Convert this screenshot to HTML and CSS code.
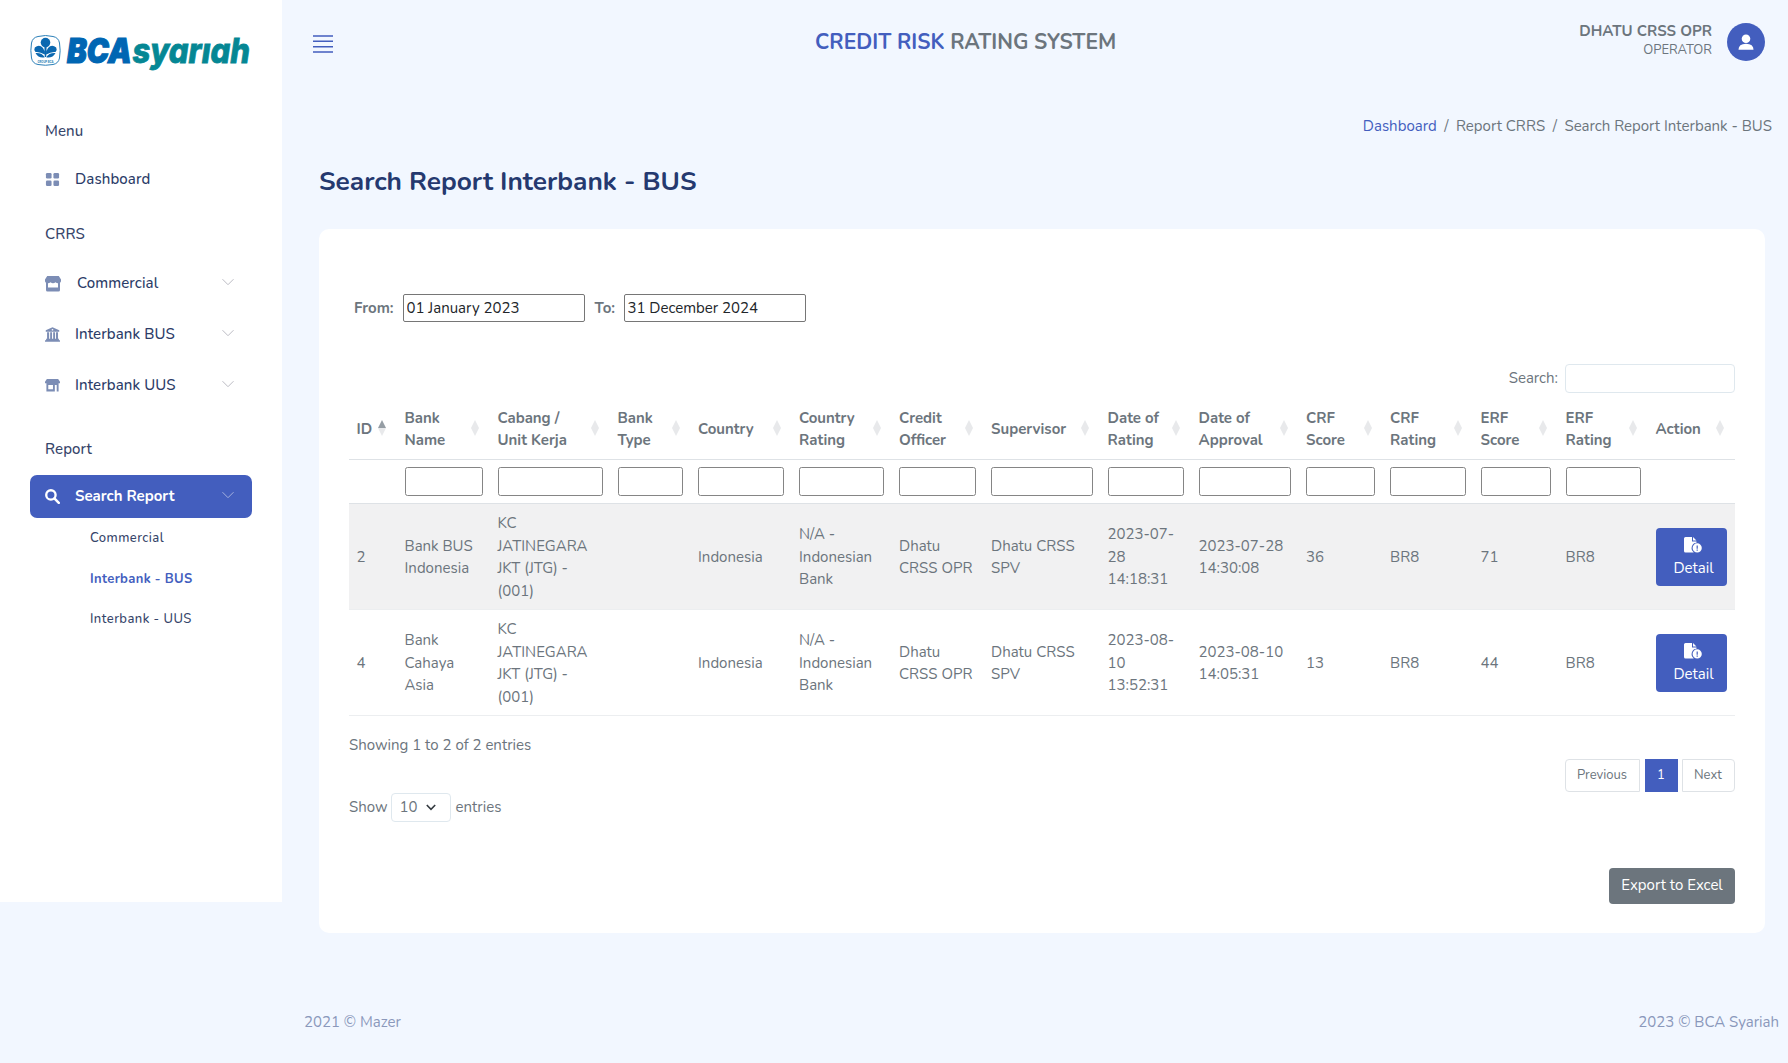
FILE: index.html
```html
<!DOCTYPE html>
<html lang="en">
<head>
<meta charset="utf-8">
<title>Search Report Interbank - BUS</title>
<link rel="stylesheet" href="styles.css">
</head>
<body>
<svg width="0" height="0" class="defs">
  <symbol id="chev" viewBox="0 0 16 16"><path d="M2.500 5.200 8 10.700l5.500-5.500" fill="none" stroke="currentColor" stroke-width="1"/></symbol>
  <symbol id="file" viewBox="0 0 18 16">
    <path d="M1.500 0H8v4.500h4.500v1.300A5.300 5.300 0 0 0 9.700 15.300 2 2 0 0 1 9 15.500H1.500A1.500 1.500 0 0 1 0 14V1.500A1.500 1.500 0 0 1 1.500 0zM9 0l3.500 3.500H9z"/>
    <path fill-rule="evenodd" d="M13.200 6.300a4.600 4.600 0 1 1 0 9.200 4.600 4.600 0 0 1 0-9.200zm-.6 2.200v3.200h1.200V8.500zm0 4v1.200h1.200v-1.200z"/>
  </symbol>
</svg>
<div class="app">
  <aside class="sidebar">
    <svg class="logo" viewBox="0 -10 230 64" width="230" height="64">
      <path d="M8 2.500Q15.500 .5 23 2.500 28.500 3.500 29.500 9q1.300 7.500 0 15-1 5.500-6.500 6.500-7.500 1.500-15 0Q2.500 29.500 1.500 24q-1.300-7.500 0-15Q2.500 3.500 8 2.500z" fill="#fff" stroke="#2b7fb8" stroke-width="1"/>
      <g fill="#0b68b0"><circle cx="15.500" cy="8.600" r="4.800"/><path d="M14.400 13h2.200l-.4 10h-1.400zM4.800 13.500q4.500-3.500 8.200.5 2 2.500 1.700 6.500Q10 17.500 5.500 18q-2-2-.7-4.500zM26.200 13.500q-4.500-3.500-8.200.5-2 2.500-1.700 6.500 4.700-3 9.200-2.500 2-2 .7-4.500z"/><path d="M5.500 19q6.500-.5 9.300 4.300-6.300 1.200-9.300-4.300zM25.500 19q-6.500-.5-9.300 4.300 6.300 1.200 9.300-4.300z"/></g>
      <text class="logo-tag" x="7.500" y="28.500" textLength="16" lengthAdjust="spacingAndGlyphs">GROUP BCA</text>
      <text class="logo-bca" x="37" y="29.300" textLength="64.500" lengthAdjust="spacingAndGlyphs">BCA</text>
      <text class="logo-sy" x="102.500" y="29.300" textLength="117.500" lengthAdjust="spacingAndGlyphs">syarıah</text>
    </svg>
    <nav class="menu">
      <div class="title first">Menu</div>
      <a class="item dash"><svg viewBox="0 0 16 16"><rect x="1" y="1" width="6" height="6" rx="1.300"/><rect x="9" y="1" width="6" height="6" rx="1.300"/><rect x="1" y="9" width="6" height="6" rx="1.300"/><rect x="9" y="9" width="6" height="6" rx="1.300"/></svg><span>Dashboard</span></a>
      <div class="title">CRRS</div>
      <a class="item wide"><svg viewBox="0 0 16 16"><path d="M2.200 0h11.600L16 3.600V5a2 2 0 0 1-1 1.700V14a1.500 1.500 0 0 1-1.500 1.500h-11A1.500 1.500 0 0 1 1 14V6.700A2 2 0 0 1 0 5V3.600zM3 7.200V11.500h10V7.200q-1.300 0-2.500-1-2.500 1.900-5 0-1.200 1-2.500 1z"/></svg><span>Commercial</span><svg class="chev"><use href="#chev"/></svg></a>
      <a class="item"><svg viewBox="0 0 16 16"><path fill-rule="evenodd" d="M8 .2 15.200 3.500V5H.8V3.500zM8 2a.9.900 0 1 0 0 1.800A.9.900 0 0 0 8 2zM2.200 5.500h2.200v7H2.200zM5.500 5.500h2v7h-2zM8.700 5.500h2v7h-2zM11.700 5.500h2.200v7h-2.200zM1.200 12.500h13.600V14H16v1.800H0V14h1.200z"/></svg><span>Interbank BUS</span><svg class="chev"><use href="#chev"/></svg></a>
      <a class="item"><svg viewBox="0 0 16 16"><path fill-rule="evenodd" d="M2 1h12l2 3v1.500H0V4zM1.500 5.500h13V14.500h-2V7.500h-2V14.500h-9zM3.500 7.500v4.500h5V7.500z"/></svg><span>Interbank UUS</span><svg class="chev"><use href="#chev"/></svg></a>
      <div class="title report">Report</div>
      <a class="item active"><svg viewBox="0 0 16 16"><circle cx="6.300" cy="6.300" r="5" fill="none" stroke="currentColor" stroke-width="2.500"/><path d="m10 10 4.700 4.700" stroke="currentColor" stroke-width="2.700" stroke-linecap="round"/></svg><span>Search Report</span><svg class="chev"><use href="#chev"/></svg></a>
      <div class="submenu"><a>Commercial</a><a class="on">Interbank - BUS</a><a>Interbank - UUS</a></div>
    </nav>
  </aside>
  <main class="main">
    <header class="topbar">
      <svg class="burger" viewBox="0 0 20 18" width="20" height="18"><path d="M0 1h20M0 6.300h20M0 11.700h20M0 17h20" stroke="#435ebe" stroke-width="1.500"/></svg>
      <div class="brand"><b>CREDIT RISK</b> RATING SYSTEM</div>
      <div class="user"><div><div class="name">DHATU CRSS OPR</div><div class="role">OPERATOR</div></div>
      <svg viewBox="0 0 38 38" width="38" height="38"><circle cx="19" cy="19" r="19" fill="#435ebe"/><circle cx="19" cy="15.800" r="4.300" fill="#fff"/><path d="M11.500 26.800q0-6 7.500-6t7.500 6z" fill="#fff"/></svg></div>
    </header>
    <div class="crumbs"><a>Dashboard</a><i>/</i><span>Report CRRS</span><i>/</i><span>Search Report Interbank - BUS</span></div>
    <h1>Search Report Interbank - BUS</h1>
    <section class="card">
      <div class="range"><b>From:</b><input class="date" value="01 January 2023"><b class="to">To:</b><input class="date" value="31 December 2024"></div>
      <div class="search"><span>Search:</span><input></div>
      <table>
        <colgroup><col class="c1"><col class="c2"><col class="c3"><col class="c4"><col class="c5"><col class="c6"><col class="c7"><col class="c8"><col class="c9"><col class="c10"><col class="c11"><col class="c12"><col class="c13"><col class="c14"><col class="c15"></colgroup>
        <thead>
          <tr class="heads"><th class="asc">ID</th><th>Bank<br>Name</th><th>Cabang /<br>Unit Kerja</th><th>Bank<br>Type</th><th>Country</th><th>Country<br>Rating</th><th>Credit<br>Officer</th><th>Supervisor</th><th>Date of<br>Rating</th><th>Date of<br>Approval</th><th>CRF<br>Score</th><th>CRF<br>Rating</th><th>ERF<br>Score</th><th>ERF<br>Rating</th><th>Action</th></tr>
          <tr class="filters"><td></td><td><input></td><td><input></td><td><input></td><td><input></td><td><input></td><td><input></td><td><input></td><td><input></td><td><input></td><td><input></td><td><input></td><td><input></td><td><input></td><td></td></tr>
        </thead>
        <tbody>
          <tr class="odd"><td>2</td><td>Bank BUS<br>Indonesia</td><td>KC<br>JATINEGARA<br>JKT (JTG) -<br>(001)</td><td></td><td>Indonesia</td><td>N/A -<br>Indonesian<br>Bank</td><td>Dhatu<br>CRSS OPR</td><td>Dhatu CRSS<br>SPV</td><td>2023-07-<br>28<br>14:18:31</td><td>2023-07-28<br>14:30:08</td><td>36</td><td>BR8</td><td>71</td><td>BR8</td><td><button class="detail"><svg><use href="#file"/></svg><span>Detail</span></button></td></tr>
          <tr><td>4</td><td>Bank<br>Cahaya<br>Asia</td><td>KC<br>JATINEGARA<br>JKT (JTG) -<br>(001)</td><td></td><td>Indonesia</td><td>N/A -<br>Indonesian<br>Bank</td><td>Dhatu<br>CRSS OPR</td><td>Dhatu CRSS<br>SPV</td><td>2023-08-<br>10<br>13:52:31</td><td>2023-08-10<br>14:05:31</td><td>13</td><td>BR8</td><td>44</td><td>BR8</td><td><button class="detail"><svg><use href="#file"/></svg><span>Detail</span></button></td></tr>
        </tbody>
      </table>
      <div class="below">
        <div><div class="info">Showing 1 to 2 of 2 entries</div>
        <div class="length"><span>Show</span><span class="select">10<svg viewBox="0 0 10 7" width="10" height="7"><path d="m.8 1 4.200 4.300L9.200 1" fill="none" stroke="#343a40" stroke-width="1.600"/></svg></span><span>entries</span></div></div>
        <div class="pager"><a>Previous</a><a class="cur">1</a><a>Next</a></div>
      </div>
      <button class="export">Export to Excel</button>
    </section>
    <footer><span>2021 © Mazer</span><span>2023 © BCA Syariah</span></footer>
  </main>
</div>
</body>
</html>
```
FILE: styles.css
```css
* { box-sizing: border-box; }
body { margin: 0; background: #f2f7ff; color: #6c757d; font: 15px/22.5px Nunito, Lato, sans-serif; }
input, button { font: inherit; letter-spacing: inherit; }
.defs { position: absolute; }
.app { display: flex; height: 1063px; overflow: hidden; }

.sidebar { width: 282px; height: 902px; background: #fff; padding: 24px 30px 0; flex: none; }
.logo { display: block; overflow: visible; }
.logo-bca, .logo-sy { font-family: Inter, sans-serif; font-weight: 900; font-style: italic; }
.logo-bca { font-size: 34px; fill: #0066b3; stroke: #0066b3; stroke-width: 1.200px; }
.logo-sy { font-size: 34.500px; font-weight: 800; fill: #058794; stroke: #058794; stroke-width: .8px; }
.logo-tag { font: 700 4px Inter, sans-serif; fill: #2b7fb8; }
.menu { color: #36456a; font-weight: 500; letter-spacing: .1px; }
.title { padding-left: 15px; height: 23px; margin: 22px 0 16px; }
.title.first { margin: 32px 0 15px; }
.item { display: flex; align-items: center; height: 43px; margin-bottom: 8px; padding: 0 15px; color: #2c3c68; border-radius: 7px; }
.item.dash { margin-bottom: 0; height: 43px; }
.item > svg { width: 15px; height: 15px; fill: #7c8db5; flex: none; }
.item > span { margin-left: 15px; flex: 1; }
.item.wide > svg:first-child { width: 16px; height: 16px; }
.item.wide > span { margin-left: 16px; }
.item .chev { width: 16px; height: 16px; color: #bcbcc4; margin: 0 1px 3px 0; }
.title.report { margin: 31px 0 14px; }
.item.active { background: #435ebe; color: #fff; font-weight: 700; letter-spacing: 0; margin-bottom: 1px; }
.item.active .chev { color: #a5b1de; }
.submenu { display: flex; flex-direction: column; padding-left: 60px; font-size: 13px; letter-spacing: .45px; }
.submenu a { height: 40.500px; line-height: 38px; }
.submenu .on { color: #435ebe; font-weight: 700; letter-spacing: .35px; }

.main { flex: 1; min-width: 0; }
.topbar { height: 84px; padding: 0 23px 0 31px; display: grid; grid-template-columns: 482px 1fr auto; align-items: center; }
.burger { margin: 4px 0 0 0; }
.brand { font-size: 21px; font-weight: 700; margin-left: 20px; white-space: nowrap; }
.brand b { color: #435ebe; font-weight: 700; }
.user { display: flex; align-items: center; gap: 15px; text-align: right; }
.user > div { padding-bottom: 2px; }
.name { font-weight: 700; line-height: 19px; }
.role { font-size: 13px; line-height: 19px; }
.crumbs { display: flex; justify-content: flex-end; height: 23px; margin-top: 31px; padding-right: 16px; }
.crumbs a { color: #435ebe; }
.crumbs i { font-style: normal; margin: 0 7.500px; }
h1 { margin: 27px 0 0 37px; font-size: 26.250px; line-height: 32px; font-weight: 700; color: #25396f; }
.card { margin: 32px 23px 0 37px; height: 704px; background: #fff; border-radius: 10px; padding: 65px 30px 0; }
.range { display: flex; align-items: center; height: 28px; padding-left: 5px; }
.range b { width: 48.500px; }
.range .to { width: 29px; margin-left: 10px; }
.date { width: 182px; height: 28px; border: 1px solid #767676; border-radius: 2px; padding: 1px 3px; color: #212529; background: #fff; }
.search { display: flex; justify-content: flex-end; align-items: center; gap: 7px; margin-top: 42px; height: 28px; }
.search input { width: 170px; height: 29px; border: 1px solid #dfe8ee; border-radius: 4px; }

table { width: 1385.500px; table-layout: fixed; border-collapse: separate; border-spacing: 0; margin-top: 7px; }
.c1 { width: 48px; } .c2 { width: 93px; } .c3 { width: 120px; } .c4 { width: 80.500px; } .c5 { width: 101px; }
.c6 { width: 100px; } .c7 { width: 92px; } .c8 { width: 116.500px; } .c9 { width: 91px; } .c10 { width: 107.500px; }
.c11 { width: 84px; } .c12 { width: 90.500px; } .c13 { width: 85px; } .c14 { width: 90px; } .c15 { width: 86.500px; }
th, td { padding: 7.500px; text-align: left; vertical-align: middle; border-bottom: 1px solid #dee2e6; white-space: nowrap; }
th { position: relative; font-weight: 700; height: 61px; }
th::before, th::after { content: ""; position: absolute; right: 11px; border: 4px solid transparent; }
th::before { top: 21px; border-bottom: 8px solid #e8e9eb; border-top: 0; }
th::after { top: 29px; border-top: 8px solid #e8e9eb; border-bottom: 0; }
th.asc::before { border-bottom-color: #959da4; }
.filters td { height: 44px; padding: 7px 7.500px; }
.filters input { display: block; width: 100%; height: 29px; border: 1px solid #858585; border-radius: 2.500px; }
tbody td { height: 106px; padding: 8px 7.500px 7px; border-color: #eceef0; }
.odd td { background: #f1f1f2; }
.detail { display: flex; flex-direction: column; align-items: center; width: 71px; height: 58px; padding: 9px 0 0; border: 0; border-radius: 4px; background: #435ebe; color: #fff; }
.detail svg { width: 18px; height: 16px; fill: #fff; margin-left: 3px; }
.detail span { margin: 4px 0 0 5px; }
.below { display: flex; justify-content: space-between; }
.info { margin-top: 18px; }
.length { display: flex; align-items: center; margin-top: 36px; gap: 5px; }
.select { display: flex; align-items: center; justify-content: space-between; width: 60px; height: 29px; border: 1px solid #dfe8ee; border-radius: 4px; padding: 0 14px 0 8px; margin-left: -2px; }
.pager { display: flex; gap: 4.500px; margin-top: 43px; font-size: 13px; }
.pager a { height: 33px; line-height: 31px; border: 1px solid #dee2e6; padding: 0 11px; }
.pager a:first-child { width: 75px; border-radius: 4px 0 0 4px; }
.pager a:last-child { width: 53px; border-radius: 0 4px 4px 0; }
.pager .cur { background: #435ebe; border-color: #435ebe; color: #fff; width: 33px; text-align: center; padding: 0; }
.export { display: block; margin: 46px 0 0 auto; width: 126px; height: 36px; background: #6c757d; color: #fff; border: 0; border-radius: 4px; padding: 0; }
footer { display: flex; justify-content: space-between; margin-top: 78px; padding: 0 9px 0 22px; color: #8a98bb; }
```
